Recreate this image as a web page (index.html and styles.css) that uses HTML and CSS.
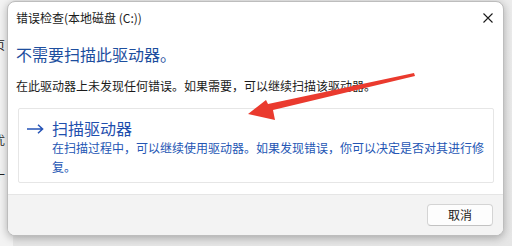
FILE: index.html
```html
<!DOCTYPE html>
<html lang="zh-CN">
<head>
<meta charset="utf-8">
<link rel="stylesheet" href="styles.css">
</head>
<body>
<div class="desktop">
  <div class="backwin">
    <div class="bw-line bw-1">页</div>
    <div class="bw-line bw-2">优</div>
    <div class="bw-line bw-3">十</div>
  </div>
  <div class="dialog">
    <div class="titlebar">
      <span class="title">错误检查(本地磁盘 (C:))</span>
      <svg class="close" width="10" height="10" viewBox="0 0 10 10"><path d="M0.5 0.5L9.5 9.5M9.5 0.5L0.5 9.5" stroke="#1b1b1b" stroke-width="1.1" fill="none"/></svg>
    </div>
    <div class="content">
      <div class="heading">不需要扫描此驱动器。</div>
      <div class="body-text">在此驱动器上未发现任何错误。如果需要，可以继续扫描该驱动器。</div>
      <div class="card">
        <svg class="go" width="18" height="10" viewBox="0 0 18 10"><path d="M1 5H16.5M12 0.8L16.6 5L12 9.2" stroke="#2553b6" stroke-width="1.5" fill="none"/></svg>
        <div class="card-text">
          <div class="card-title">扫描驱动器</div>
          <div class="card-desc">在扫描过程中，可以继续使用驱动器。如果发现错误，你可以决定是否对其进行修复。</div>
        </div>
      </div>
    </div>
    <div class="footer">
      <button class="btn">取消</button>
    </div>
  </div>
  <svg class="annot" width="512" height="246" viewBox="0 0 512 246"><polygon points="248,114 266,100 268,104 414,73 415,76 273,110 275,120" fill="#ea3a2e"/></svg>
</div>
</body>
</html>
```

FILE: styles.css
```css
* { box-sizing: border-box; }
html, body { margin: 0; padding: 0; }
body {
  width: 512px;
  height: 246px;
  overflow: hidden;
  font-family: "Noto Sans CJK SC", "Noto Sans", sans-serif;
  background: #e3e3e3;
}
.desktop {
  position: relative;
  width: 512px;
  height: 246px;
  overflow: hidden;
  background: linear-gradient(#ececec, #e6e6e6);
}
.backwin {
  position: absolute;
  left: -7px;
  top: 0;
  width: 20px;
  height: 246px;
  background: #f3f3f3;
  font-size: 12px;
  color: #222;
  display: flex;
  flex-direction: column;
}
.bw-line { line-height: 16px; }
.bw-1 { margin-top: 37px; }
.bw-2 { margin-top: 79px; }
.bw-3 { margin-top: 19px; }
.dialog {
  position: absolute;
  left: 7px;
  top: 1px;
  width: 497px;
  height: 235px;
  background: #fff;
  border: 1px solid #bdbdbd;
  border-radius: 8px;
  overflow: hidden;
  box-shadow: 0 2px 8px rgba(0,0,0,0.28);
  display: flex;
  flex-direction: column;
}
.titlebar {
  height: 30px;
  display: flex;
  align-items: center;
  justify-content: space-between;
  padding: 1px 10px 0 8px;
}
.title {
  font-size: 12px;
  color: #1b1b1b;
  line-height: 16px;
}
.close { display: block; }
.content {
  flex: 1;
  padding: 0 9px 0 8px;
}
.heading {
  margin-top: 11px;
  font-size: 16px;
  line-height: 22px;
  color: #1d4e9e;
}
.body-text {
  margin-top: 12px;
  font-size: 12px;
  line-height: 18px;
  color: #1b1b1b;
}
.card {
  margin: 13px 0 0 2px;
  border: 1px solid #e6e6e6;
  border-radius: 2px;
  height: 75px;
  display: flex;
  align-items: flex-start;
  padding: 9px 8px 0 7px;
}
.go { margin-top: 6px; flex: none; }
.card-text { margin-left: 8px; }
.card-title {
  font-size: 16px;
  line-height: 20px;
  color: #1f4fae;
}
.card-desc {
  font-size: 12px;
  line-height: 19px;
  color: #2456b4;
  width: 436px;
}
.footer {
  height: 41px;
  background: #f3f3f3;
  border-top: 1px solid #e5e5e5;
  display: flex;
  justify-content: flex-end;
  align-items: flex-start;
  padding: 9px 10px 0 0;
}
.btn {
  width: 66px;
  height: 22px;
  font-family: "Noto Sans CJK SC", sans-serif;
  font-size: 12px;
  color: #1b1b1b;
  background: #fdfdfd;
  border: 1px solid #d4d4d4;
  border-bottom-color: #c2c2c2;
  border-radius: 4px;
  padding: 0;
  line-height: 20px;
}
.annot {
  position: absolute;
  left: 0;
  top: 0;
  pointer-events: none;
}
```
